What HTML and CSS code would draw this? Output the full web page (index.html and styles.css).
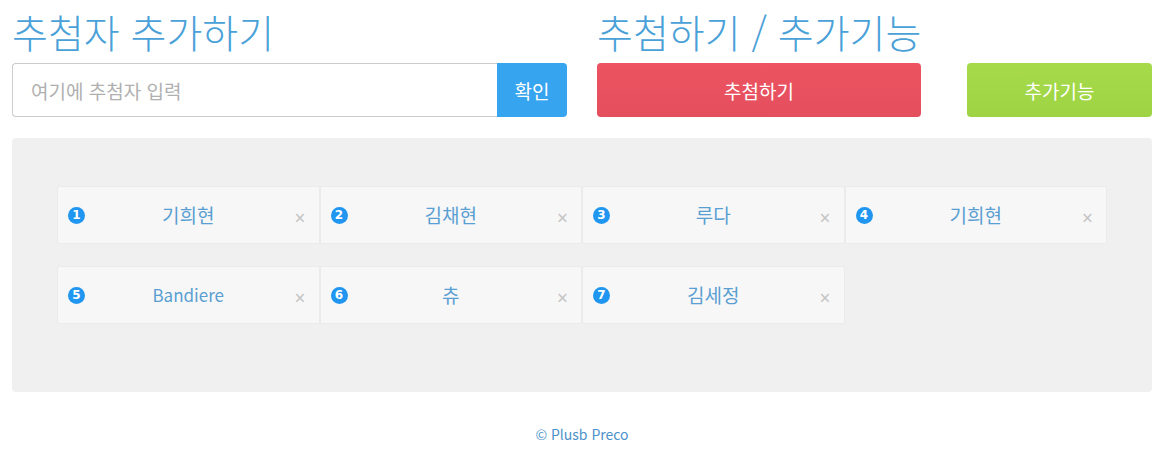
FILE: index.html
```html
<!DOCTYPE html>
<html lang="ko">
<head>
    <meta charset="UTF-8">
    <meta name="viewport" content="width=device-width, initial-scale=1.0">
    <title>추첨기</title>
    <link rel="stylesheet" href="styles.css">
</head>
<body>
    <div class="container">
        <div class="top">
            <div class="col">
                <h1>추첨자 추가하기</h1>
                <div class="input-row">
                    <input type="text" placeholder="여기에 추첨자 입력">
                    <button class="btn-ok">확인</button>
                </div>
            </div>
            <div class="col">
                <h1>추첨하기 / 추가기능</h1>
                <div class="btn-row">
                    <button class="btn-draw">추첨하기</button>
                    <button class="btn-extra">추가기능</button>
                </div>
            </div>
        </div>

        <div class="panel">
            <div class="card"><span class="num">1</span><span class="name">기희현</span><span class="del">×</span></div>
            <div class="card"><span class="num">2</span><span class="name">김채현</span><span class="del">×</span></div>
            <div class="card"><span class="num">3</span><span class="name">루다</span><span class="del">×</span></div>
            <div class="card"><span class="num">4</span><span class="name">기희현</span><span class="del">×</span></div>
            <div class="card"><span class="num">5</span><span class="name latin">Bandiere</span><span class="del">×</span></div>
            <div class="card"><span class="num">6</span><span class="name">츄</span><span class="del">×</span></div>
            <div class="card"><span class="num">7</span><span class="name">김세정</span><span class="del">×</span></div>
        </div>

        <p class="footer">© Plusb Preco</p>
    </div>
</body>
</html>
```

FILE: styles.css
```css
* { box-sizing: border-box; }
body { margin: 0; font-family: "Noto Sans", "Noto Sans CJK KR", sans-serif; background: #fff; }
.container { padding: 0 17px 0 12px; }
.top { display: grid; grid-template-columns: 1fr 1fr; gap: 30px; }
h1 { margin: 6px 0 7px; font-size: 39px; font-weight: 300; line-height: 50px; color: #4aa1d8; font-family: "Noto Sans CJK KR", sans-serif; }
.input-row { display: flex; height: 54px; }
.input-row input { flex: 1; border: 1px solid #ccc; border-right: none; border-radius: 4px 0 0 4px; padding: 0 18px; font-size: 19px; font-family: "Noto Sans CJK KR", sans-serif; color: #555; outline: none; }
.input-row input::placeholder { color: #b0b0b0; }
button { border: none; color: #fff; font-size: 19px; font-family: "Noto Sans CJK KR", sans-serif; cursor: pointer; }
.btn-ok { width: 70px; background: #36a4ef; border-radius: 0 4px 4px 0; }
.btn-row { display: grid; grid-template-columns: 324px 1fr; gap: 46px; height: 54px; }
.btn-draw { background: linear-gradient(#ed5361, #e44f5e); border-radius: 4px; }
.btn-extra { background: linear-gradient(#a6da4b, #9ed444); border-radius: 4px; }
.panel { margin-top: 21px; background: #f0f0f0; border-radius: 4px; padding: 48px 45px 24px; display: flex; flex-wrap: wrap; height: 254px; align-content: flex-start; }
.card { width: 25%; height: 58px; margin-bottom: 22px; background: #f7f7f7; border: 1px solid #ebebeb; border-radius: 2px; display: flex; align-items: center; position: relative; padding: 0 10px; }
.num { width: 17px; height: 17px; border-radius: 50%; background: #2196f0; color: #fff; font-size: 12px; font-weight: 700; display: flex; align-items: center; justify-content: center; font-family: "DejaVu Sans", sans-serif; }
.name { flex: 1; text-align: center; font-size: 19px; color: #5a9fd2; font-family: "Noto Sans CJK KR", sans-serif; margin-top: -2px; }
.name.latin { font-size: 17px; }
.del { color: #c4c4c4; font-size: 19px; margin-top: 6px; width: 17px; text-align: center; }
.footer { text-align: center; margin: 32px 0 0; font-size: 14px; color: #4c92c9; font-family: "Noto Sans CJK KR", sans-serif; }
```
